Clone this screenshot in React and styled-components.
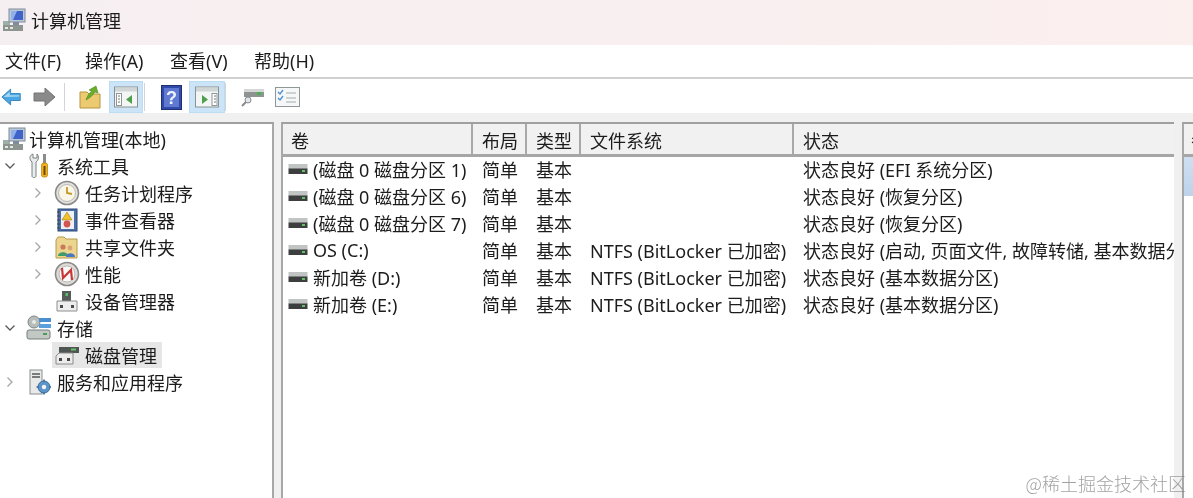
import React from "react";
import styled, { createGlobalStyle } from "styled-components";

const GlobalStyle = createGlobalStyle`
  html, body {
    margin: 0;
    padding: 0;
    background: #fff;
    overflow: hidden;
  }
  body {
    font-family: "Noto Sans", "Noto Sans CJK SC", sans-serif;
    font-size: 18px;
    color: #1c1c1c;
  }
`;

const Win = styled.div`
  position: relative;
  width: 1193px;
  height: 498px;
  display: flex;
  flex-direction: column;
  overflow: hidden;
  filter: blur(0.4px);
`;

const TitleBar = styled.div`
  height: 45px;
  flex: none;
  display: flex;
  align-items: center;
  gap: 5px;
  padding-left: 2px;
  box-sizing: border-box;
  padding-bottom: 5px;
  background: linear-gradient(90deg, #f6eff1 0%, #f9eff0 60%, #fbf0ee 100%);
`;

const MenuBar = styled.div`
  height: 34px;
  flex: none;
  display: grid;
  grid-template-columns: 80px 85px 84px auto;
  align-items: center;
  padding-left: 5px;
  box-sizing: border-box;
  background: #fff;
  border-bottom: 2px solid #d0d0d0;
`;

const MenuItem = styled.span`
  line-height: 32px;
  white-space: nowrap;
`;

const ToolBar = styled.div`
  height: 34px;
  flex: none;
  display: flex;
  align-items: center;
  background: #fff;
  box-sizing: border-box;
  padding-top: 2px;
  overflow: hidden;
`;

const ToolSlot = styled.div`
  width: ${(p) => p.$w || 34}px;
  height: 32px;
  flex: none;
  display: flex;
  align-items: center;
  justify-content: center;
  box-sizing: border-box;
  background: ${(p) => (p.$active ? "#cce4f7" : "transparent")};
  border: 1px solid ${(p) => (p.$active ? "#bcdcf4" : "transparent")};
`;

const ToolSep = styled.div`
  width: 1px;
  height: 28px;
  flex: none;
  margin: 0 ${(p) => p.$r ?? 6}px 0 ${(p) => p.$l ?? 6}px;
  background: #d4d4d4;
`;

const Body = styled.div`
  flex: 1;
  min-height: 0;
  display: flex;
  background: #f0f0f0;
  padding-top: 9px;
`;

const TreePane = styled.div`
  width: 274px;
  flex: none;
  box-sizing: border-box;
  background: #fff;
  border-top: 2px solid #a0a0a0;
  border-right: 2px solid #a8a8a8;
  padding-top: 1px;
`;

const TreeRow = styled.div`
  height: 27px;
  display: flex;
  align-items: center;
  padding-left: ${(p) => p.$indent}px;
`;

const Caret = styled.div`
  width: 20px;
  flex: none;
  display: flex;
  align-items: center;
  justify-content: center;
  margin-right: 5px;
`;

const IconBox = styled.div`
  width: ${(p) => (p.$root ? 28 : 31)}px;
  height: 26px;
  flex: none;
  display: flex;
  align-items: center;
  justify-content: center;
  box-sizing: border-box;
  padding-right: ${(p) => (p.$root ? 0 : 3)}px;
`;

const TreeLabel = styled.span`
  white-space: nowrap;
  margin-left: 1px;
`;

const Selected = styled.div`
  display: flex;
  align-items: center;
  height: 26px;
  background: #e6e6e6;
  margin-left: -1px;
  padding: 0 5px 0 1px;
`;

const TablePane = styled.div`
  width: 893px;
  margin-left: 7px;
  flex: none;
  box-sizing: border-box;
  background: #fff;
  border-top: 2px solid #a0a0a0;
  border-left: 2px solid #a8a8a8;
  overflow: hidden;
`;

const GridRow = styled.div`
  display: grid;
  grid-template-columns: 190px 54px 54px 213px 380px;
  align-items: center;
  box-sizing: border-box;
`;

const HeaderRow = styled(GridRow)`
  height: 33px;
  background: #f1f1f1;
  border-bottom: 3px solid #a6a6a6;
`;

const BodyRow = styled(GridRow)`
  height: 27px;
  padding-bottom: 4px;
`;

const HeadCell = styled.div`
  height: 100%;
  display: flex;
  align-items: center;
  padding: 1px 0 0 9px;
  box-sizing: border-box;
  border-right: 2px solid #a8a8a8;
  background: #f1f1f1;
  &:first-child {
    padding-left: 8px;
  }
  &:last-child {
    border-right: 0;
  }
`;

const Cell = styled.div`
  padding-left: 9px;
  white-space: nowrap;
  overflow: hidden;
  display: flex;
  align-items: center;
  gap: 4px;
`;

const VolCell = styled(Cell)`
  padding-left: 5px;
  gap: 5px;
`;

const SidePane = styled.div`
  width: 11px;
  margin-left: 8px;
  flex: none;
  box-sizing: border-box;
  background: #fff;
  border-top: 2px solid #a0a0a0;
  border-left: 2px solid #a8a8a8;
  overflow: hidden;
`;

const SideHead = styled.div`
  height: 33px;
  background: #f1f1f1;
  border-bottom: 3px solid #a6a6a6;
  box-sizing: border-box;
  padding-left: 7px;
  display: flex;
  align-items: center;
  white-space: nowrap;
`;

const SideSelected = styled.div`
  height: 39px;
  background: linear-gradient(180deg, #cfdff1, #bcd3ea);
`;

const Watermark = styled.div`
  position: absolute;
  right: 7px;
  bottom: 5px;
  font-size: 18px;
  line-height: 20px;
  color: rgba(110, 110, 110, 0.65);
  font-family: "Noto Sans CJK SC", sans-serif;
  font-weight: 300;
  white-space: nowrap;
`;

const ChevronDown = () => (
  <svg width="12" height="8" viewBox="0 0 12 8">
    <path d="M1.5 1.5 L6 6 L10.5 1.5" fill="none" stroke="#5a5a5a" strokeWidth="1.3" />
  </svg>
);

const ChevronRight = () => (
  <svg width="8" height="12" viewBox="0 0 8 12">
    <path d="M1.5 1.5 L6 6 L1.5 10.5" fill="none" stroke="#a6a6a6" strokeWidth="1.3" />
  </svg>
);

const ComputerIcon = ({ size = 24 }) => (
  <svg width={size} height={size} viewBox="0 0 24 24">
    <rect x="1" y="13" width="7" height="4" fill="#9fb0a8" />
    <rect x="7" y="1" width="16" height="13" fill="#bcc8d6" stroke="#7f8c9c" />
    <rect x="9" y="3" width="12" height="9" fill="#3f63c9" />
    <path d="M9 3 L15 3 L11 12 L9 12 Z" fill="#8fb0ea" />
    <rect x="11" y="14" width="6" height="3" fill="#7f8c9c" />
    <rect x="1" y="17" width="20" height="6" fill="#8d9591" />
    <rect x="3" y="19" width="3" height="2" fill="#e6e8e6" />
    <rect x="8" y="19" width="3" height="2" fill="#e6e8e6" />
  </svg>
);

const ToolsIcon = () => (
  <svg width="22" height="26" viewBox="0 0 22 26">
    <path d="M5 1 C2 2 1 5 3 8 L4 9 L4 23 C4 25 8 25 8 23 L8 9 C11 7 11 3 9 1 L9 5 L5 5 Z" fill="#e9ecec" stroke="#7b8280" />
    <rect x="15" y="1" width="3" height="10" fill="#8c8c8c" />
    <rect x="13.5" y="10" width="6" height="14" rx="2" fill="#f2b21c" stroke="#b37d0a" strokeWidth="0.7" />
    <rect x="15.5" y="13" width="2" height="9" fill="#6b4a08" />
  </svg>
);

const ClockIcon = () => (
  <svg width="26" height="26" viewBox="0 0 26 26">
    <circle cx="13" cy="13" r="11.5" fill="#e4e2dc" stroke="#8a8a8a" strokeWidth="1.6" />
    <circle cx="13" cy="13" r="8.5" fill="#faf6e8" stroke="#b9b9b9" />
    <path d="M13 7 L13 13 L18 14" fill="none" stroke="#c7992a" strokeWidth="1.8" />
  </svg>
);

const EventIcon = () => (
  <svg width="22" height="24" viewBox="0 0 22 24">
    <rect x="2" y="1" width="19" height="22" fill="#4a6fa8" stroke="#2f4a78" />
    <rect x="5" y="3" width="13" height="18" fill="#eef0f4" />
    <path d="M11 4 L16 12 L6 12 Z" fill="#f2c22c" stroke="#a67d12" strokeWidth="0.6" />
    <circle cx="11" cy="16" r="3.4" fill="#d2564f" />
    <path d="M1 4 h3 M1 8 h3 M1 12 h3 M1 16 h3 M1 20 h3" stroke="#444" strokeWidth="1" />
  </svg>
);

const ShareIcon = () => (
  <svg width="24" height="24" viewBox="0 0 24 24">
    <path d="M1 5 L1 23 L22 23 L22 4 L11 4 L9 2 L3 2 Z" fill="#ecd68f" stroke="#b69a4c" />
    <circle cx="8" cy="12" r="2.6" fill="#c8795a" />
    <path d="M3 21 C3 16 13 16 13 21 Z" fill="#3f9a6b" />
    <circle cx="15" cy="13" r="2.4" fill="#d9a27a" />
    <path d="M11 22 C11 17 20 17 20 22 Z" fill="#4a75c2" />
  </svg>
);

const PerfIcon = () => (
  <svg width="26" height="26" viewBox="0 0 26 26">
    <circle cx="13" cy="13" r="11.5" fill="#dedbd6" stroke="#8a8a8a" strokeWidth="1.6" />
    <circle cx="13" cy="13" r="8" fill="#fbfafa" stroke="#b9b9b9" />
    <path d="M8 7 L9 17 L17 9 L18 19" fill="none" stroke="#c93636" strokeWidth="2.2" />
  </svg>
);

const DeviceIcon = () => (
  <svg width="22" height="24" viewBox="0 0 22 24">
    <rect x="6" y="2" width="9" height="11" fill="#555c58" />
    <rect x="9.5" y="4" width="2.4" height="3" fill="#5ec06a" />
    <path d="M1 12 L21 12 L21 22 L1 22 Z" fill="#eeeeee" stroke="#8f8f8f" />
    <rect x="4" y="16" width="3" height="3" fill="#4c4c4c" />
    <rect x="15" y="16" width="3" height="3" fill="#4c4c4c" />
  </svg>
);

const StorageIcon = () => (
  <svg width="26" height="26" viewBox="0 0 26 26">
    <ellipse cx="8" cy="7" rx="6" ry="6" fill="#b7bdb8" stroke="#7f8683" />
    <circle cx="8" cy="7" r="2" fill="#e8ebe8" />
    <rect x="13" y="3" width="12" height="4" fill="#4b8fd1" />
    <rect x="13" y="9" width="12" height="4" fill="#5aa0dc" />
    <rect x="1" y="15" width="23" height="9" rx="2" fill="#c2c8c3" stroke="#767c78" />
    <rect x="17" y="18" width="4" height="2" fill="#4c9a54" />
  </svg>
);

const DiskMgmtIcon = () => (
  <svg width="24" height="20" viewBox="0 0 24 20">
    <rect x="4" y="2" width="20" height="6" fill="#4f5552" />
    <rect x="16" y="3.5" width="5" height="2" fill="#67c46d" />
    <path d="M4 8 L18 8 L18 19 L1 19 L1 11 Z" fill="#ecebea" stroke="#8a8a8a" />
    <rect x="4" y="13" width="3" height="3" fill="#454545" />
    <rect x="12" y="13" width="3" height="3" fill="#454545" />
  </svg>
);

const ServicesIcon = () => (
  <svg width="24" height="26" viewBox="0 0 24 26">
    <rect x="3" y="1" width="12" height="24" fill="#e8e9e9" stroke="#8a8f8f" />
    <path d="M5 5 h8 M5 8 h8" stroke="#555" strokeWidth="1.4" />
    <circle cx="17" cy="18" r="6" fill="#5d94c8" stroke="#3a6b99" />
    <circle cx="17" cy="18" r="2.2" fill="#f0f4f8" />
    <path d="M17 10.5 v2 M17 23.5 v2 M9.5 18 h2 M22.5 18 h2" stroke="#3a6b99" strokeWidth="1.6" />
  </svg>
);

const DriveIcon = () => (
  <svg width="20" height="12" viewBox="0 0 20 12">
    <rect x="0.5" y="1" width="19" height="5" fill="#c0c4c2" />
    <rect x="0.5" y="5.5" width="19" height="5.5" fill="#3c3f3e" />
    <rect x="14" y="7" width="3" height="2" fill="#5fc267" />
  </svg>
);

const BackIcon = () => (
  <svg width="24" height="20" viewBox="0 0 24 20">
    <path d="M1 10 L11 1 L11 6 L22 6 L22 14 L11 14 L11 19 Z" fill="#4aa6e2" stroke="#2d7fba" />
    <path d="M3 10 L10 4 L10 8 L21 8 L21 9.5 L6 10 Z" fill="#a4d6f4" />
  </svg>
);

const ForwardIcon = () => (
  <svg width="24" height="20" viewBox="0 0 24 20">
    <path d="M23 10 L13 1 L13 6 L2 6 L2 14 L13 14 L13 19 Z" fill="#8a8a8a" stroke="#747474" />
  </svg>
);

const UpFolderIcon = () => (
  <svg width="22" height="24" viewBox="0 0 22 24">
    <path d="M1 7 L8 7 L10 9 L21 9 L21 23 L1 23 Z" fill="#ecca72" stroke="#b5953f" />
    <path d="M7 15 C9 10 10 8 13 6 L10 5 L17 1 L19 8 L16 7 C14 10 11 13 7 15 Z" fill="#6cac2c" stroke="#4c8a17" strokeWidth="0.6" />
  </svg>
);

const PaneIcon = ({ flip }) => (
  <svg width="24" height="22" viewBox="0 0 24 22">
    <rect x="0.5" y="1" width="23" height="20" fill="#f4f6f6" stroke="#8a9292" />
    <rect x="1" y="1.5" width="22" height="4" fill="#d0d5d5" />
    <rect x={flip ? 17 : 2.5} y="7.5" width="5" height="12" fill="#fff" stroke="#8f9696" />
    <path d="M4 10 h2 M4 13 h2 M4 16 h2" stroke="#6f7676" transform={flip ? "translate(15 0)" : ""} />
    {flip ? (
      <path d="M7 9 L13 13.5 L7 18 Z" fill="#4ea04e" />
    ) : (
      <path d="M18 9 L12 13.5 L18 18 Z" fill="#4ea04e" />
    )}
  </svg>
);

const HelpIcon = () => (
  <svg width="21" height="25" viewBox="0 0 21 25">
    <rect x="0.5" y="0.5" width="20" height="24" fill="#2f4aa8" stroke="#1f2f72" />
    <rect x="3" y="3" width="15" height="19" fill="#5f79d0" />
    <text x="10.5" y="19" textAnchor="middle" fontSize="18" fontWeight="700" fill="#eef2ff" fontFamily="Liberation Sans, sans-serif">?</text>
  </svg>
);

const ScanIcon = () => (
  <svg width="24" height="22" viewBox="0 0 24 22">
    <rect x="3" y="3" width="20" height="8" fill="#8d9491" />
    <rect x="3" y="3" width="20" height="3" fill="#d4d7d5" />
    <rect x="16" y="6" width="4" height="3" fill="#48b24f" />
    <circle cx="7" cy="14" r="3" fill="#dfe6ea" stroke="#8a8a8a" />
    <path d="M5 16 L1 20" stroke="#8a8a8a" strokeWidth="2" />
  </svg>
);

const ChecklistIcon = () => (
  <svg width="25" height="20" viewBox="0 0 25 20">
    <rect x="0.5" y="0.5" width="24" height="19" fill="#f6f7f8" stroke="#8f9696" />
    <path d="M3 5 L5 7 L8 3 M3 11 L5 13 L8 9" fill="none" stroke="#4a90d0" strokeWidth="1.3" />
    <path d="M11 6 h10 M11 11 h10 M11 15 h10" stroke="#a6abab" />
  </svg>
);

const treeRows = [
  { label: "计算机管理(本地)", indent: 0, icon: <ComputerIcon />, flat: true },
  { label: "系统工具", indent: 0, icon: <ToolsIcon />, caret: "down" },
  { label: "任务计划程序", indent: 28, icon: <ClockIcon />, caret: "right" },
  { label: "事件查看器", indent: 28, icon: <EventIcon />, caret: "right" },
  { label: "共享文件夹", indent: 28, icon: <ShareIcon />, caret: "right" },
  { label: "性能", indent: 28, icon: <PerfIcon />, caret: "right" },
  { label: "设备管理器", indent: 28, icon: <DeviceIcon />, caret: "none" },
  { label: "存储", indent: 0, icon: <StorageIcon />, caret: "down" },
  { label: "磁盘管理", indent: 28, icon: <DiskMgmtIcon />, caret: "none", selected: true },
  { label: "服务和应用程序", indent: 0, icon: <ServicesIcon />, caret: "right" },
];

const columns = ["卷", "布局", "类型", "文件系统", "状态"];

const ntfs = "NTFS (BitLocker 已加密)";
const volumes = [
  ["(磁盘 0 磁盘分区 1)", "", "状态良好 (EFI 系统分区)"],
  ["(磁盘 0 磁盘分区 6)", "", "状态良好 (恢复分区)"],
  ["(磁盘 0 磁盘分区 7)", "", "状态良好 (恢复分区)"],
  ["OS (C:)", ntfs, "状态良好 (启动, 页面文件, 故障转储, 基本数据分区)"],
  ["新加卷 (D:)", ntfs, "状态良好 (基本数据分区)"],
  ["新加卷 (E:)", ntfs, "状态良好 (基本数据分区)"],
];

const TreeItem = ({ row }) => {
  const content = (
    <>
      <IconBox $root={row.flat}>{row.icon}</IconBox>
      <TreeLabel>{row.label}</TreeLabel>
    </>
  );
  return (
    <TreeRow $indent={row.indent}>
      {!row.flat && (
        <Caret>
          {row.caret === "down" && <ChevronDown />}
          {row.caret === "right" && <ChevronRight />}
        </Caret>
      )}
      {row.selected ? <Selected>{content}</Selected> : content}
    </TreeRow>
  );
};

const App = () => {
  return (
    <Win>
      <GlobalStyle />
      <TitleBar>
        <ComputerIcon />
        <span>计算机管理</span>
      </TitleBar>
      <MenuBar>
        <MenuItem>文件(F)</MenuItem>
        <MenuItem>操作(A)</MenuItem>
        <MenuItem>查看(V)</MenuItem>
        <MenuItem>帮助(H)</MenuItem>
      </MenuBar>
      <ToolBar>
        <ToolSlot $w={23}><BackIcon /></ToolSlot>
        <ToolSlot $w={41}><ForwardIcon /></ToolSlot>
        <ToolSep $l={0} $r={6} />
        <ToolSlot $w={38}><UpFolderIcon /></ToolSlot>
        <ToolSlot $active><PaneIcon /></ToolSlot>
        <ToolSep $l={1} $r={8} />
        <ToolSlot $w={36}><HelpIcon /></ToolSlot>
        <ToolSlot $active $w={36}><PaneIcon flip /></ToolSlot>
        <ToolSep $l={0} $r={10} />
        <ToolSlot $w={33}><ScanIcon /></ToolSlot>
        <ToolSlot $w={36}><ChecklistIcon /></ToolSlot>
      </ToolBar>
      <Body>
        <TreePane>
          {treeRows.map((row) => (
            <TreeItem key={row.label} row={row} />
          ))}
        </TreePane>
        <TablePane>
          <HeaderRow>
            {columns.map((c) => (
              <HeadCell key={c}>{c}</HeadCell>
            ))}
          </HeaderRow>
          {volumes.map(([name, fs, status]) => (
            <BodyRow key={name}>
              <VolCell><DriveIcon />{name}</VolCell>
              <Cell>简单</Cell>
              <Cell>基本</Cell>
              <Cell>{fs}</Cell>
              <Cell>{status}</Cell>
            </BodyRow>
          ))}
        </TablePane>
        <SidePane>
          <SideHead>卷</SideHead>
          <SideSelected />
        </SidePane>
      </Body>
      <Watermark>@稀土掘金技术社区</Watermark>
    </Win>
  );
};

export default App;
